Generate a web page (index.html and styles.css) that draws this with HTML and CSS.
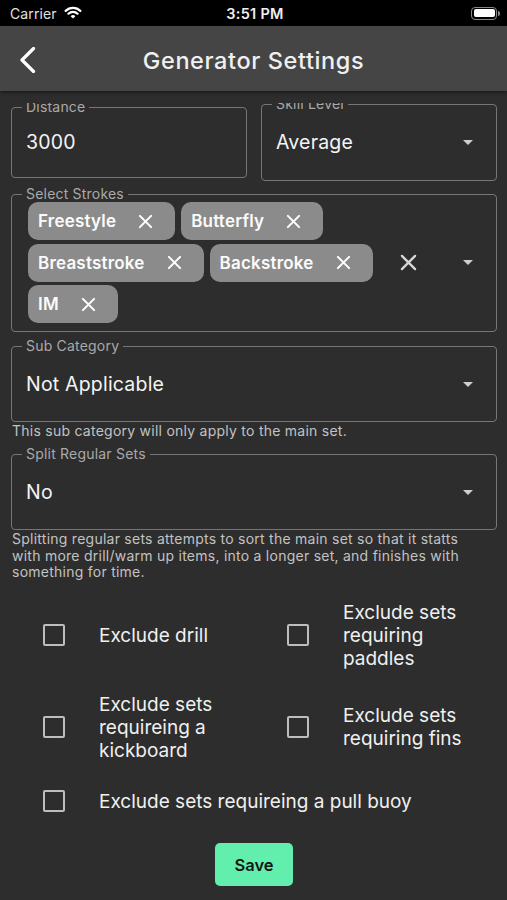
FILE: index.html
```html
<!DOCTYPE html>
<html lang="en">
<head>
<meta charset="utf-8">
<title>Generator Settings</title>
<link rel="stylesheet" href="styles.css">
</head>
<body>
<div class="status">
  <div class="status-left">
    <span class="carrier">Carrier</span>
    <svg class="wifi" width="18" height="13" viewBox="0 0 18 13">
      <path d="M1.6 4.9 A10.5 10.5 0 0 1 16.4 4.9" fill="none" stroke="#fff" stroke-width="2.2" stroke-linecap="round"/>
      <path d="M4.4 7.7 A6.6 6.6 0 0 1 13.6 7.7" fill="none" stroke="#fff" stroke-width="2.2" stroke-linecap="round"/>
      <path d="M9 12.6 L6.6 10.3 A3.4 3.4 0 0 1 11.4 10.3 Z" fill="#fff"/>
    </svg>
  </div>
  <div class="time">3:51 PM</div>
  <div class="status-right">
    <div class="battery"><div class="battery-fill"></div></div>
    <div class="battery-cap"></div>
  </div>
</div>

<header class="nav">
  <div class="nav-left">
    <svg class="back" width="16" height="26" viewBox="0 0 16 26">
      <path d="M13.5 1.5 L2 13 L13.5 24.5" fill="none" stroke="#fff" stroke-width="3.2" stroke-linecap="round" stroke-linejoin="round"/>
    </svg>
  </div>
  <h1 class="title">Generator Settings</h1>
  <div></div>
</header>

<main class="scroll">
  <div class="pair">
    <fieldset class="field field-distance">
      <legend>Distance</legend>
      <div class="value">3000</div>
    </fieldset>
    <fieldset class="field field-skill">
      <legend>Skill Level</legend>
      <div class="value select-value"><span>Average</span><span class="caret"></span></div>
    </fieldset>
  </div>

  <fieldset class="field field-strokes">
    <legend>Select Strokes</legend>
    <div class="strokes">
      <div class="chips">
        <span class="chip">Freestyle<svg class="chip-x" width="16" height="16" viewBox="0 0 16 16"><path d="M2 2 L14 14 M14 2 L2 14" stroke="#fff" stroke-width="2.2" stroke-linecap="round"/></svg></span>
        <span class="chip">Butterfly<svg class="chip-x" width="16" height="16" viewBox="0 0 16 16"><path d="M2 2 L14 14 M14 2 L2 14" stroke="#fff" stroke-width="2.2" stroke-linecap="round"/></svg></span>
        <span class="chip">Breaststroke<svg class="chip-x" width="16" height="16" viewBox="0 0 16 16"><path d="M2 2 L14 14 M14 2 L2 14" stroke="#fff" stroke-width="2.2" stroke-linecap="round"/></svg></span>
        <span class="chip">Backstroke<svg class="chip-x" width="16" height="16" viewBox="0 0 16 16"><path d="M2 2 L14 14 M14 2 L2 14" stroke="#fff" stroke-width="2.2" stroke-linecap="round"/></svg></span>
        <span class="chip">IM<svg class="chip-x" width="16" height="16" viewBox="0 0 16 16"><path d="M2 2 L14 14 M14 2 L2 14" stroke="#fff" stroke-width="2.2" stroke-linecap="round"/></svg></span>
      </div>
      <svg class="clear-x" width="18" height="18" viewBox="0 0 18 18"><path d="M2 2 L16 16 M16 2 L2 16" stroke="#d8d8d8" stroke-width="2.4" stroke-linecap="round"/></svg>
      <span class="caret"></span>
    </div>
  </fieldset>

  <fieldset class="field field-sub">
    <legend>Sub Category</legend>
    <div class="value select-value"><span>Not Applicable</span><span class="caret"></span></div>
  </fieldset>
  <p class="helper helper-sub">This sub category will only apply to the main set.</p>

  <fieldset class="field field-split">
    <legend>Split Regular Sets</legend>
    <div class="value select-value"><span>No</span><span class="caret"></span></div>
  </fieldset>
  <p class="helper helper-split">Splitting regular sets attempts to sort the main set so that it statts with more drill/warm up items, into a longer set, and finishes with something for time.</p>

  <div class="checks">
    <label class="check"><span class="box"></span><span class="check-label">Exclude drill</span></label>
    <label class="check"><span class="box"></span><span class="check-label">Exclude sets requiring paddles</span></label>
    <label class="check"><span class="box"></span><span class="check-label">Exclude sets requireing a kickboard</span></label>
    <label class="check"><span class="box"></span><span class="check-label">Exclude sets requiring fins</span></label>
    <label class="check check-wide"><span class="box"></span><span class="check-label">Exclude sets requireing a pull buoy</span></label>
  </div>

  <div class="actions">
    <button class="save">Save</button>
  </div>
</main>
</body>
</html>
```

FILE: styles.css
```css
* { box-sizing: border-box; }
html, body {
  margin: 0;
  padding: 0;
  background: #2d2d2d;
  color: #f2f2f2;
  font-family: Inter, "Liberation Sans", Arial, sans-serif;
  width: 507px;
  height: 900px;
  overflow: hidden;
}

/* status bar */
.status {
  height: 26px;
  background: #000;
  display: grid;
  grid-template-columns: 1fr auto 1fr;
  align-items: center;
  padding: 0 7px 0 10px;
}
.status-left { display: flex; align-items: center; gap: 7px; }
.carrier { font-size: 14px; color: #e0e0e0; letter-spacing: 0.1px; }
.wifi { display: block; margin-top: -1px; }
.time { font-size: 14.5px; font-weight: 600; color: #f0f0f0; letter-spacing: 0.3px; }
.status-right { display: flex; align-items: center; justify-content: flex-end; }
.battery {
  width: 26px;
  height: 13px;
  border: 1px solid #888;
  border-radius: 4px;
  padding: 1.5px;
}
.battery-fill { width: 100%; height: 100%; background: #fff; border-radius: 2px; }
.battery-cap { width: 2px; height: 5px; background: #888; border-radius: 0 2px 2px 0; margin-left: 1px; }

/* nav bar */
.nav {
  height: 65px;
  background: #454545;
  display: grid;
  grid-template-columns: 1fr auto 1fr;
  align-items: center;
  position: relative;
  box-shadow: 0 1px 4px rgba(0, 0, 0, 0.55);
  padding-top: 3px;
}
.nav-left { padding-left: 20px; display: flex; }
.back { display: block; }
.title {
  margin: 0;
  font-size: 23.5px;
  font-weight: 500;
  color: #f0f0f0;
  letter-spacing: 0.6px;
}

/* scroll area */
.scroll {
  margin-top: 12px;
  height: 797px;
  overflow: hidden;
  padding: 0 10px 0 11px;
}

.pair {
  display: flex;
  gap: 14px;
  align-items: center;
  margin-top: -7px;
}

.field {
  margin: 0;
  padding: 0;
  min-width: 0;
  border: 1px solid #767676;
  border-radius: 4px;
}
.field legend {
  margin-left: 10px;
  padding: 0 4px;
  font-size: 14px;
  line-height: 16px;
  color: #a9a9a9;
  letter-spacing: 0.2px;
}
.value {
  font-size: 19.5px;
  line-height: 24px;
  color: #f4f4f4;
  padding-left: 14px;
  letter-spacing: 0.2px;
}
.select-value {
  display: flex;
  align-items: center;
  justify-content: space-between;
  padding-right: 23px;
}
.caret {
  width: 0;
  height: 0;
  border-left: 5.5px solid transparent;
  border-right: 5.5px solid transparent;
  border-top: 5.5px solid #cfcfcf;
}

.field-distance { flex: 1; }
.field-distance .value { padding-top: 14.5px; padding-bottom: 23px; }
.field-skill { flex: 1; }
.field-skill .value { padding-top: 18px; padding-bottom: 26px; }

.field-strokes { margin-top: 5px; }
.strokes {
  display: flex;
  align-items: center;
  padding: 0 23px 8px 16px;
}
.chips {
  width: 362px;
  display: flex;
  flex-wrap: wrap;
  gap: 3.5px 6px;
}
.chip {
  height: 38px;
  display: inline-flex;
  align-items: center;
  background: #8b8b8b;
  border-radius: 10px;
  padding: 0 22px 0 10px;
  font-size: 17px;
  font-weight: 600;
  color: #fbfbfb;
  letter-spacing: 0.2px;
}
.chip-x { display: block; margin-left: 22px; width: 15px; height: 15px; }
.clear-x { display: block; margin-left: 10px; width: 17px; height: 17px; }
.strokes .caret { margin-left: auto; }

.field-sub { margin-top: 6px; }
.field-sub .value, .field-split .value { padding-top: 18px; padding-bottom: 25px; }

.helper {
  margin: 1px 0 0 1px;
  padding-right: 12px;
  font-size: 14px;
  line-height: 16.6px;
  color: #c2c2c2;
  letter-spacing: 0.25px;
}
.field-split { margin-top: 6.5px; }

/* checkboxes */
.checks {
  margin-top: 20px;
  display: grid;
  grid-template-columns: 1fr 1fr;
  row-gap: 23px;
}
.check {
  display: flex;
  align-items: center;
  gap: 34px;
  padding-left: 32px;
}
.box {
  flex: none;
  width: 22px;
  height: 22px;
  border: 2px solid #bdbdbd;
  border-radius: 2px;
}
.check-label {
  width: 135px;
  font-size: 19px;
  line-height: 23px;
  color: #f0f0f0;
}
.check:nth-child(2) { padding-left: 33px; }
.check:nth-child(4) { padding-left: 33px; }
.check-wide {
  grid-column: span 2;
  margin-top: 5px;
}
.check-wide .check-label { width: auto; }

.actions {
  display: flex;
  justify-content: center;
  margin-top: 30.5px;
}
.save {
  width: 78px;
  height: 43px;
  border: none;
  border-radius: 5px;
  background: #62eeac;
  color: #161616;
  font-family: Inter, "Liberation Sans", Arial, sans-serif;
  font-size: 16.5px;
  font-weight: 600;
}
```
